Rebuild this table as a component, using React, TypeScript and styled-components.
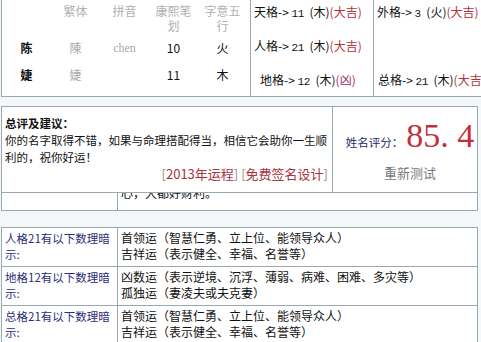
import React from "react"
import styled, { createGlobalStyle } from "styled-components"

const line = "#98a9b1"
const cjk = `"Noto Sans CJK SC", "Noto Sans", sans-serif`

const GlobalStyle = createGlobalStyle`
  html, body {
    margin: 0;
    padding: 0;
    background: #f3f7f8;
  }
  body {
    font-family: ${cjk};
    font-size: 11.5px;
    color: #111;
    width: 481px;
    height: 342px;
    overflow: hidden;
  }
`

const Page = styled.div`
  display: flex;
  flex-direction: column;
  padding-left: 1px;
`

/* ---------- top: characters + 五格 ---------- */

const TopTable = styled.div`
  display: flex;
  height: 97px;
`

const CharCell = styled.div`
  width: 250px;
  box-sizing: border-box;
  border-left: 1px solid ${line};
  border-right: 1px solid ${line};
  border-bottom: 1px solid ${line};
  background: #fff;
  padding-top: 3px;
`

const CharGrid = styled.div`
  display: grid;
  grid-template-columns: repeat(5, 49px);
  grid-template-rows: 30px 24px 24px;
  row-gap: 3px;
`

const HeadCell = styled.div`
  text-align: center;
  line-height: 15px;
  font-size: 12px;
  color: #b0b0b0;
  padding: 0 5px;
`

const DataCell = styled.div<{ $tone?: "bold" | "gray" | "latin" }>`
  text-align: center;
  line-height: 24px;
  font-size: 12px;
  font-weight: ${(p) => (p.$tone === "bold" ? 700 : 400)};
  color: ${(p) => (p.$tone === "gray" || p.$tone === "latin" ? "#a8a8a8" : "#111")};
  font-family: ${(p) => (p.$tone === "latin" ? `"Liberation Serif", serif` : cjk)};
`

const GeCell = styled.div<{ $last?: boolean }>`
  width: ${(p) => (p.$last ? "auto" : "123px")};
  flex: ${(p) => (p.$last ? 1 : "none")};
  box-sizing: border-box;
  border-right: ${(p) => (p.$last ? "none" : `1px solid ${line}`)};
  border-bottom: 1px solid ${line};
  background: #fff;
  padding: 4px 0 8px 3px;
  display: flex;
  flex-direction: column;
  justify-content: space-between;
  white-space: nowrap;
  overflow: hidden;
  font-size: 12px;
`

const GeLine = styled.div<{ $indent?: number }>`
  line-height: 16px;
  height: 16px;
  padding-left: ${(p) => p.$indent ?? 0}px;
`

const Num = styled.span`
  font-family: "Liberation Mono", monospace;
  font-size: 11px;
  letter-spacing: -0.5px;
  margin-right: 3px;
`

const Luck = styled.span<{ $bad?: boolean }>`
  color: ${(p) => (p.$bad ? "#a32f6a" : "#b2343b")};
`

/* ---------- summary ---------- */

const SummaryBox = styled.div`
  display: flex;
  margin-top: 9px;
  width: 477px;
  height: 87px;
  box-sizing: border-box;
  border: 1px solid ${line};
  background: #fff;
`

const SummaryText = styled.div`
  width: 331px;
  box-sizing: border-box;
  border-right: 1px solid ${line};
  padding: 8px 4px 0 3px;
  line-height: 17px;
`

const SummaryTitle = styled.div`
  font-weight: 700;
`

const Links = styled.div`
  text-align: right;
  font-size: 13px;
  line-height: 16px;
  color: #a8323e;
`

const Bracket = styled.span`
  color: #9a8a8a;
`

const ScoreCell = styled.div`
  flex: 1;
  display: flex;
  flex-direction: column;
  align-items: center;
  padding: 12px 0 0 10px;
`

const ScoreRow = styled.div`
  display: flex;
  align-items: baseline;
  gap: 3px;
`

const ScoreLabel = styled.span`
  color: #1c2a68;
  font-size: 11.5px;
`

const ScoreValue = styled.span`
  font-family: "Liberation Serif", "Times New Roman", serif;
  font-size: 34px;
  line-height: 34px;
  color: #c2303a;
`

const Retest = styled.div`
  margin-top: 10px;
  font-size: 13px;
  color: #7a7a7a;
`

const PartialRow = styled.div`
  display: grid;
  grid-template-columns: 115px 1fr;
  width: 477px;
  height: 18px;
  box-sizing: border-box;
  border-left: 1px solid ${line};
  border-right: 1px solid ${line};
  border-bottom: 1px solid ${line};
  background: #fff;
  overflow: hidden;
`

const PartialText = styled.div`
  border-left: 1px solid ${line};
  padding-left: 3px;
  line-height: 16px;
  font-size: 12px;
  margin-top: -8px;
`

/* ---------- meanings ---------- */

const MeaningTable = styled.div`
  margin-top: 16px;
  width: 477px;
  box-sizing: border-box;
  border-left: 1px solid ${line};
  border-right: 1px solid ${line};
  background: #fff;
`

const MeaningRow = styled.div`
  display: grid;
  grid-template-columns: 115px 1fr;
  border-top: 1px solid ${line};
  height: 39px;
  box-sizing: border-box;
`

const MeaningLabel = styled.div`
  color: #2c2d7a;
  padding: 2px 3px 0 3px;
  line-height: 16px;
`

const MeaningBody = styled.div`
  border-left: 1px solid ${line};
  padding: 2px 0 0 3px;
  line-height: 16px;
  font-size: 12px;
`

const chars = [
  { c: "陈", t: "陳", py: "chen", n: "10", w: "火" },
  { c: "婕", t: "婕", py: "", n: "11", w: "木" },
]

const meanings = [
  { label: "人格21有以下数理暗示:", lines: ["首领运（智慧仁勇、立上位、能领导众人）", "吉祥运（表示健全、幸福、名誉等）"] },
  { label: "地格12有以下数理暗示:", lines: ["凶数运（表示逆境、沉浮、薄弱、病难、困难、多灾等）", "孤独运（妻凌夫或夫克妻）"] },
  { label: "总格21有以下数理暗示:", lines: ["首领运（智慧仁勇、立上位、能领导众人）", "吉祥运（表示健全、幸福、名誉等）"] },
]

const Ge = ({ name, num, el, luck, bad }: { name: string; num: string; el: string; luck: string; bad?: boolean }) => (
  <>
    {name}-&gt; <Num>{num}</Num> ({el})<Luck $bad={bad}>({luck})</Luck>
  </>
)

export default function App() {
  return (
    <>
      <GlobalStyle />
      <Page>
        <TopTable>
          <CharCell>
            <CharGrid>
              <HeadCell />
              <HeadCell>繁体</HeadCell>
              <HeadCell>拼音</HeadCell>
              <HeadCell>康熙笔划</HeadCell>
              <HeadCell>字意五行</HeadCell>
              {chars.map((r) => (
                <React.Fragment key={r.c}>
                  <DataCell $tone="bold">{r.c}</DataCell>
                  <DataCell $tone="gray">{r.t}</DataCell>
                  <DataCell $tone="latin">{r.py}</DataCell>
                  <DataCell>{r.n}</DataCell>
                  <DataCell>{r.w}</DataCell>
                </React.Fragment>
              ))}
            </CharGrid>
          </CharCell>
          <GeCell>
            <GeLine>
              <Ge name="天格" num="11" el="木" luck="大吉" />
            </GeLine>
            <GeLine>
              <Ge name="人格" num="21" el="木" luck="大吉" />
            </GeLine>
            <GeLine $indent={6}>
              <Ge name="地格" num="12" el="木" luck="凶" bad />
            </GeLine>
          </GeCell>
          <GeCell $last>
            <GeLine>
              <Ge name="外格" num="3" el="火" luck="大吉" />
            </GeLine>
            <GeLine $indent={1}>
              <Ge name="总格" num="21" el="木" luck="大吉" />
            </GeLine>
          </GeCell>
        </TopTable>

        <SummaryBox>
          <SummaryText>
            <SummaryTitle>总评及建议：</SummaryTitle>
            <div>你的名字取得不错，如果与命理搭配得当，相信它会助你一生顺利的，祝你好运！</div>
            <Links>
              <Bracket>[</Bracket>2013年运程<Bracket>]</Bracket> <Bracket>[</Bracket>免费签名设计<Bracket>]</Bracket>
            </Links>
          </SummaryText>
          <ScoreCell>
            <ScoreRow>
              <ScoreLabel>姓名评分：</ScoreLabel>
              <ScoreValue>85. 4</ScoreValue>
            </ScoreRow>
            <Retest>重新测试</Retest>
          </ScoreCell>
        </SummaryBox>
        <PartialRow>
          <div />
          <PartialText>心，大都好财利。</PartialText>
        </PartialRow>

        <MeaningTable>
          {meanings.map((m, i) => (
            <MeaningRow key={i}>
              <MeaningLabel>{m.label}</MeaningLabel>
              <MeaningBody>
                {m.lines.map((l) => (
                  <div key={l}>{l}</div>
                ))}
              </MeaningBody>
            </MeaningRow>
          ))}
        </MeaningTable>
      </Page>
    </>
  )
}
